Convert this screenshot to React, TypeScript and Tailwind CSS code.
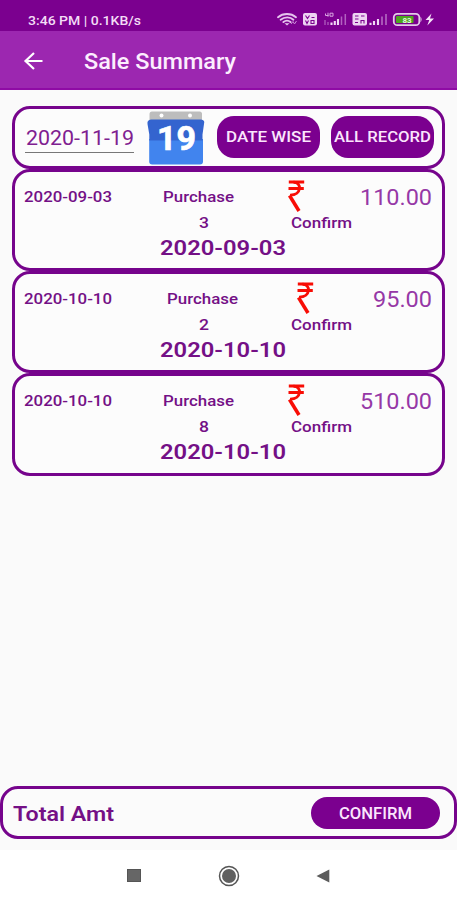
import { useLayoutEffect, useRef } from "react";

type FitProps = { children: string; width: number; className?: string };

/** Single line of text stretched horizontally to an exact width. */
function Fit({ children, width, className = "" }: FitProps) {
  const inner = useRef<HTMLSpanElement>(null);
  useLayoutEffect(() => {
    const el = inner.current;
    if (!el) return;
    el.style.transform = "none";
    const natural = el.getBoundingClientRect().width;
    el.style.transform = `scaleX(${width / natural})`;
  }, [children, width]);
  return (
    <span className={`block shrink-0 whitespace-nowrap text-left ${className}`} style={{ width }}>
      <span ref={inner} className="inline-block origin-left">
        {children}
      </span>
    </span>
  );
}

function StatusIcons() {
  return (
    <svg width="160" height="16" viewBox="276 11 160 16" className="shrink-0" fill="none">
      <g stroke="#e6c4ee" strokeWidth="1.9" strokeLinecap="round">
        <path d="M278 17.2c5-4.2 13-4.2 18 0" />
        <path d="M280.6 19.7c4-3.1 9.600-3.100 12.800 0" />
        <path d="M283.400 22.100c2.200-1.800 5-1.800 7.200 0" />
      </g>
      <path d="M284.500 23.200h5l-2.500 2.300z" fill="#e6c4ee" />
      <path d="M291 24l2-2.500 1.500 2.500 2-3" stroke="#c98ad5" strokeWidth="1" />
      <rect x="303" y="13" width="14" height="12.500" rx="2" fill="#edd3f2" />
      <path d="M305.500 15.500l2 3 2-3M311.500 17.500h3M305.500 20.500l1.500 3 1.500-3M311 20.500h3v3h-3z" stroke="#7b008f" strokeWidth="1.100" />
      <path d="M325.500 13.500v2h3M328 12.700v4M330 13.200h3v3h-3z" stroke="#d9a5e2" strokeWidth="1" />
      <path d="M325 20v5M328 22v3" stroke="#a850b8" strokeWidth="1.500" />
      <path d="M331.500 22.500v2.500M334.800 21v4M338 19v6" stroke="#f0d8f4" strokeWidth="2.100" />
      <path d="M341.500 16.500v8.500M345.300 14v11" stroke="#b261c0" strokeWidth="1.500" />
      <rect x="352.500" y="13" width="14.500" height="12.500" rx="2" fill="#edd3f2" />
      <path d="M355 16h3.500M361 16h3.500M355 19h3.500M355 22.500h3M361 23.500v-3h3v3" stroke="#7b008f" strokeWidth="1.100" />
      <path d="M370.500 22.800v2.200M374 21v4M378 19v6" stroke="#f0d8f4" strokeWidth="2.100" />
      <path d="M382 16.500v8.500M386 14v11" stroke="#b872c5" strokeWidth="1.500" />
      <rect x="393.800" y="13.800" width="25.500" height="11.400" rx="3.500" stroke="#e4c9e9" strokeWidth="1.800" />
      <path d="M420.500 16.500q2.200 3 0 6z" fill="#e4c9e9" />
      <rect x="396" y="16" width="17.500" height="7" rx="1" fill="#4da51f" />
      <text x="407" y="22.600" textAnchor="middle" fill="#e6f5df" className="font-['Roboto'] text-[8px] font-bold">83</text>
      <path d="M431.500 13.500l-6 6.500h3.800l-2 5.500 6.700-7h-4z" fill="#f5e3f8" />
    </svg>
  );
}

function CalendarIcon() {
  return (
    <svg width="58" height="54" viewBox="0 0 58 54" className="shrink-0">
      <path d="M2.500 3q0-2.500 2.500-2.500h47.500q2.500 0 2.500 2.500v7h-52.500z" fill="#bdbdbd" />
      <circle cx="14.500" cy="4.500" r="2" fill="#fff" />
      <circle cx="43" cy="4.500" r="2" fill="#fff" />
      <path d="M2.200 28h53.800V50.500q0 3-3 3H5.200q-3 0-3-3z" fill="#4184ee" />
      <path d="M1 10q1-1.500 3-1.500h50q2 0 3 1.500.500 1 0 3l-1.500 10.500V29.500H2.300V23.500L.500 13q-.3-2 .5-3z" fill="#3464cf" />
      <text x="10" y="38.800" textLength="39" lengthAdjust="spacingAndGlyphs" fill="#fff" stroke="#fff" strokeWidth=".7" className="font-['Roboto'] text-[33px] font-bold">19</text>
    </svg>
  );
}

function Rupee() {
  return (
    <svg width="20" height="32" viewBox="0 0 20 32" className="block shrink-0" fill="none" stroke="#f80d05">
      <path d="M.800 1.900H16.200M.500 8.500H15.800" strokeWidth="3" />
      <path d="M5.500 2.200C14 2 14 15.300 2 15.100" strokeWidth="2.900" />
      <path d="M1.500 15.500L11 31" strokeWidth="3.500" />
    </svg>
  );
}

type Sale = { date: string; count: string; amount: string; amountWidth: number };

const sales: Sale[] = [
  { date: "2020-09-03", count: "3", amount: "110.00", amountWidth: 72 },
  { date: "2020-10-10", count: "2", amount: "95.00", amountWidth: 59 },
  { date: "2020-10-10", count: "8", amount: "510.00", amountWidth: 72 },
];

function SaleCard({ date, count, amount, amountWidth }: Sale) {
  return (
    <section className="h-[102.4px] rounded-[18px] border-[3px] border-[#76048c] bg-[#fcfcfc] pl-[9px] pr-[10px] pt-[8px] font-medium text-[#741086]">
      <div className="flex h-[32px] justify-between">
        <Fit width={88} className="pt-[7px] text-[15px] leading-[20px]">{date}</Fit>
        <Fit width={71} className="-ml-[1px] mr-[3px] pt-[7px] text-[15px] leading-[20px]">Purchase</Fit>
        <Rupee />
        <Fit width={amountWidth} className="pt-[5px] text-[22px] font-normal leading-[26px] text-[#9638a6]">{amount}</Fit>
      </div>
      <div className="flex h-[20px] pt-[1px] text-[15px] leading-[20px]">
        <Fit width={10} className="ml-[175px]">{count}</Fit>
        <Fit width={61} className="ml-[82px]">Confirm</Fit>
      </div>
      <Fit width={126} className="ml-[135.5px] mt-[2px] text-[21px] font-semibold leading-[28px]">{date}</Fit>
    </section>
  );
}

export default function App() {
  return (
    <div className="flex h-[900px] w-[457px] flex-col overflow-hidden bg-[#fafafa] font-['Roboto','Liberation_Sans',sans-serif]">
      <div className="flex h-[31px] shrink-0 items-start justify-between bg-[#7b008f] pl-[28px] pr-[21px] pt-[11px]">
        <Fit width={113} className="pt-[.5px] text-[13px] font-medium leading-[17px] text-[#f3dcf6]">3:46 PM | 0.1KB/s</Fit>
        <StatusIcons />
      </div>
      <header className="flex h-[59px] shrink-0 items-center border-b-2 border-[#8f0ba5] bg-[#9c27b0] pl-[23px] pt-[3px]">
        <svg width="21" height="18" viewBox="0 0 21 18" fill="none" stroke="#fff" strokeWidth="2.200">
          <path d="M19.500 9H2.500M11 1L2.500 9l8.500 8" />
        </svg>
        <Fit width={152} className="ml-[40px] pt-[2px] text-[22px] font-medium leading-[28px] text-[#fceefe]">Sale Summary</Fit>
      </header>

      <main className="mx-[12px] mt-[15.5px] w-[433px] grow">
        <section className="flex h-[63px] rounded-[18px] border-[3px] border-[#76048c] bg-[#fcfcfc] pl-[10px]">
          <div className="mt-[17px] h-[27px] w-[109px] border-b border-[#777777]">
            <Fit width={108} className="ml-[1px] text-[20px] leading-[25px] text-[#7f2090]">2020-11-19</Fit>
          </div>
          <div className="ml-[13px] mt-[2px]">
            <CalendarIcon />
          </div>
          <button className="ml-[12px] mt-[7px] flex h-[42px] w-[103px] items-center justify-center rounded-[17px] bg-[#7b008f] pt-[2px] text-[15px] font-medium text-[#fbe6fd]">
            <Fit width={85}>DATE WISE</Fit>
          </button>
          <button className="ml-[11px] mt-[7px] flex h-[42px] w-[103px] items-center justify-center rounded-[17px] bg-[#7b008f] pt-[2px] text-[15px] font-medium text-[#fbe6fd]">
            <Fit width={97}>ALL RECORD</Fit>
          </button>
        </section>
        {sales.map((sale, i) => (
          <SaleCard key={i} {...sale} />
        ))}
      </main>

      <footer className="flex h-[53px] shrink-0 items-center justify-between rounded-[18px] border-[3px] border-[#76048c] bg-[#fbfbfb] pl-[10px] pr-[14px]">
        <Fit width={101} className="pt-[2px] text-[21px] font-semibold leading-[28px] text-[#741086]">Total Amt</Fit>
        <button className="flex h-[32px] w-[129px] items-center justify-center rounded-full bg-[#7b008f] pt-[2px] text-[16px] font-medium text-[#fbe6fd]">
          <Fit width={73}>CONFIRM</Fit>
        </button>
      </footer>
      <nav className="mt-[11px] flex h-[50px] shrink-0 items-center bg-white pl-[127px] pt-[1px]">
        <div className="h-[13px] w-[14px] border border-[#555] bg-[#666]" />
        <svg width="22" height="22" viewBox="0 0 22 22" className="ml-[77px]">
          <circle cx="11" cy="11" r="9.500" fill="none" stroke="#555" strokeWidth="1.500" />
          <circle cx="11" cy="11" r="7" fill="#606060" />
        </svg>
        <svg width="14" height="14" viewBox="0 0 14 14" className="ml-[76px]">
          <path d="M.500 7L13.300.500v13z" fill="#5c5c5c" />
        </svg>
      </nav>
    </div>
  );
}
